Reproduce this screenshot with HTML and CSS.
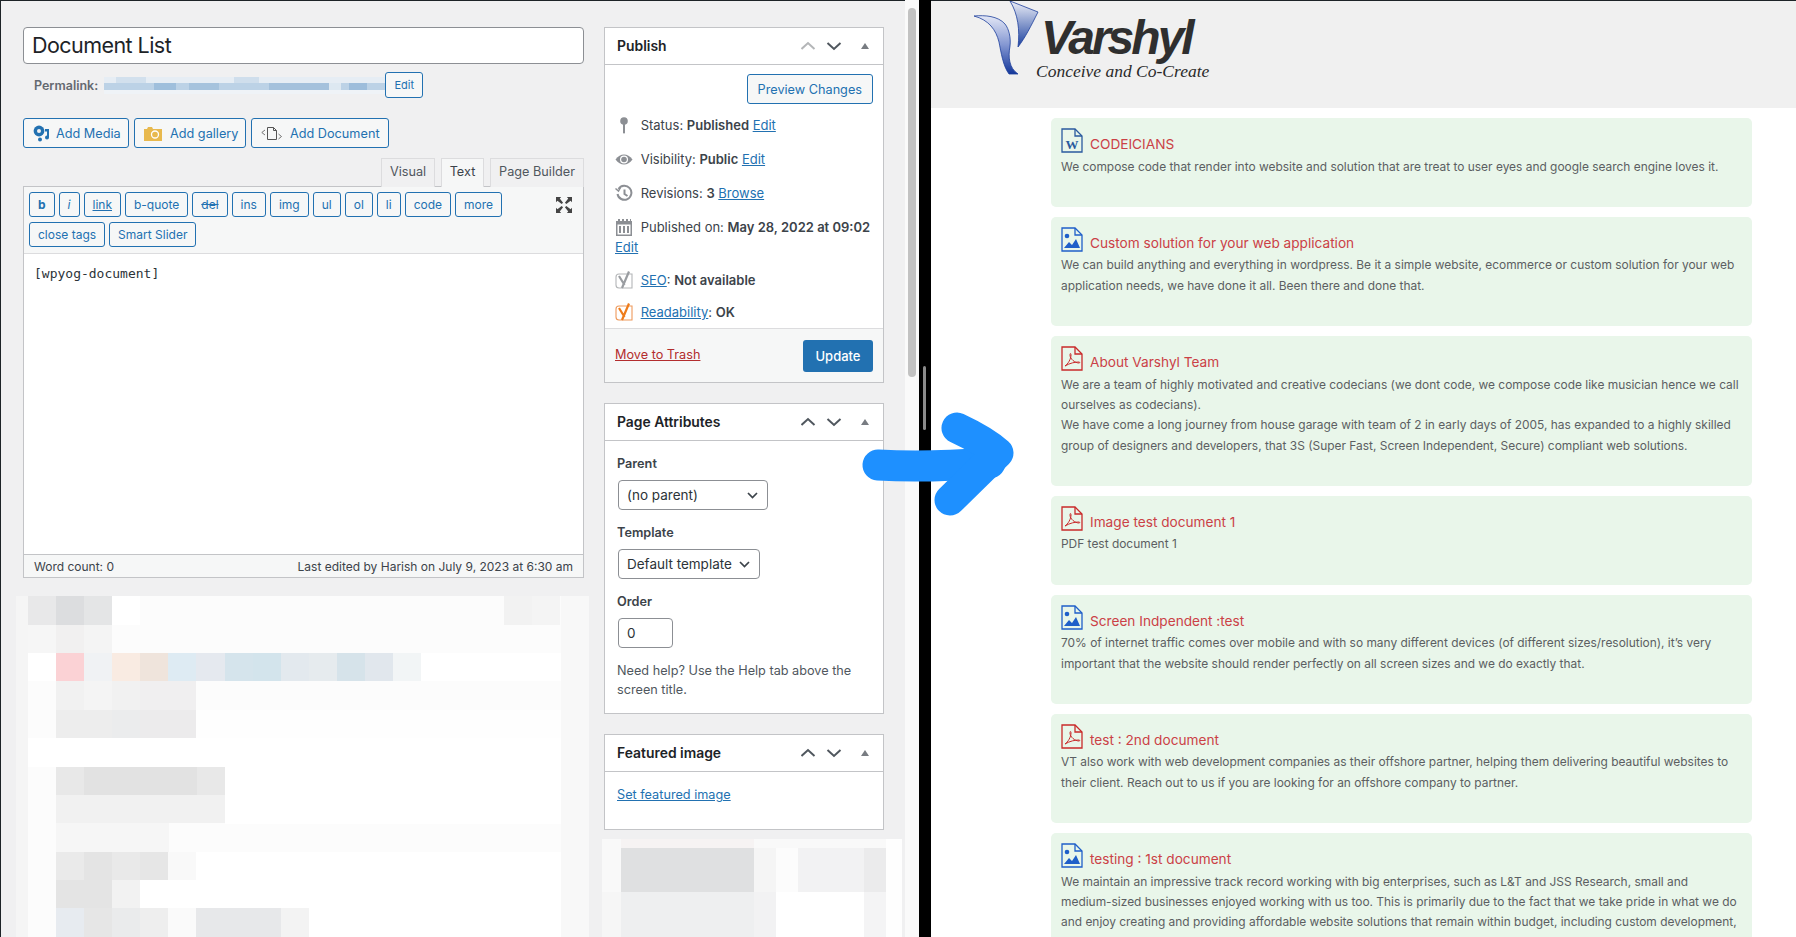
FILE: index.html
```html
<!DOCTYPE html>
<html>
<head>
  <meta charset="utf-8">
  <link rel="stylesheet" href="styles.css">
  <title>Document List</title>
</head>
<body>
  <div class="wp-pane">
    <div class="wp-columns">
      <div class="main-col">
        <div class="title-box">Document List</div>
        <div class="permalink">
          <b>Permalink:</b>
          <svg class="perma-blur" width="281" height="17" shape-rendering="crispEdges">
            <rect width="281" height="17" fill="#e6edf4"/>
            <rect y="6" width="281" height="7" fill="#bcd2e6"/>
            <rect x="12" y="0" width="30" height="6" fill="#d2e0ed"/>
            <rect x="50" y="6" width="22" height="7" fill="#9fbfdc"/>
            <rect x="85" y="6" width="30" height="7" fill="#a6c3dd"/>
            <rect x="130" y="0" width="25" height="6" fill="#cfdeec"/>
            <rect x="165" y="6" width="60" height="7" fill="#a4c1dc"/>
            <rect x="225" y="6" width="12" height="7" fill="#dde8f1"/>
            <rect x="245" y="6" width="18" height="7" fill="#9dbddb"/>
            <rect y="13" width="281" height="4" fill="#eff3f7"/>
          </svg>
          <span class="btn btn-small">Edit</span>
        </div>
        <div class="media-row">
          <span class="btn btn-media">
            <svg width="17" height="17" viewBox="0 0 17 17"><circle cx="6" cy="6" r="5.4" fill="#2271b1"/><circle cx="6" cy="6" r="2" fill="#f0f0f1"/><path d="M12 4h4v8.500a2 2 0 1 1-2-2V6.500h-2z" fill="#2271b1"/><circle cx="7" cy="14.500" r="2" fill="#2271b1"/></svg>
            Add Media
          </span>
          <span class="btn btn-media gallery">
            <svg width="18" height="15" viewBox="0 0 18 15"><path d="M0 3h3l1-2h4l1 2h9v12H0z" fill="#e8b94e"/><circle cx="11" cy="8.500" r="3.500" fill="none" stroke="#fff" stroke-width="1.300"/></svg>
            Add gallery
          </span>
          <span class="btn btn-media document">
            <svg width="21" height="15" viewBox="0 0 21 15" fill="none" stroke="#555"><path d="M6.500 1.500h6l3 3v9h-9z"/><path d="M12.500 1.500v3h3"/><path d="M4 4L.8 6.500 4 9M17.500 8l3 2.500-3 2.500" stroke-width=".8"/></svg>
            Add Document
          </span>
        </div>
        <div class="tabs">
          <span class="tab">Visual</span>
          <span class="tab active">Text</span>
          <span class="tab">Page Builder</span>
        </div>
        <div class="editor">
          <div class="toolbar">
            <div class="quicktags">
              <span class="qt bold">b</span>
              <span class="qt ital">i</span>
              <span class="qt under">link</span>
              <span class="qt">b-quote</span>
              <span class="qt strike">del</span>
              <span class="qt">ins</span>
              <span class="qt">img</span>
              <span class="qt">ul</span>
              <span class="qt">ol</span>
              <span class="qt">li</span>
              <span class="qt">code</span>
              <span class="qt">more</span>
              <span class="qt">close tags</span>
              <span class="qt">Smart Slider</span>
            </div>
            <svg class="fullscreen" width="16" height="16" viewBox="0 0 17 17" fill="#444"><path d="M0 0h5.500L4 1.500 7.500 6 6 7.500 1.500 4 0 5.500zM17 0v5.500L15.500 4 11 7.500 9.500 6 13 1.500 11.500 0zM0 17v-5.500L1.500 13 6 9.500 7.500 11 4 15.500 5.500 17zM17 17h-5.500l1.500-1.500L9.500 11 11 9.500l4.500 3.500 1.500-1.500z"/></svg>
          </div>
          <div class="editor-text">[wpyog-document]</div>
          <div class="editor-foot">
            <span>Word count: 0</span>
            <span>Last edited by Harish on July 9, 2023 at 6:30 am</span>
          </div>
        </div>
        <svg class="pixel-left" width="573" height="341" shape-rendering="crispEdges">
          <rect width="573" height="341" fill="#fcfcfc"/>
          <rect width="12" height="341" fill="#f5f5f5"/>
          <rect x="545" width="28" height="341" fill="#f8f8f8"/>
          <g transform="translate(12,0)">
            <rect x="0" y="0" width="28" height="29" fill="#e8e8e9"/>
            <rect x="28" y="0" width="28" height="29" fill="#dcdddf"/>
            <rect x="56" y="0" width="28" height="29" fill="#e4e5e6"/>
            <rect x="84" y="0" width="28" height="29" fill="#ffffff"/>
            <rect x="476" y="0" width="28" height="29" fill="#f2f2f2"/>
            <rect x="504" y="0" width="28" height="29" fill="#f4f4f4"/>
            <rect x="0" y="29" width="28" height="28" fill="#f6f6f6"/>
            <rect x="28" y="29" width="28" height="28" fill="#f1f0f0"/>
            <rect x="56" y="29" width="28" height="28" fill="#f4f4f4"/>
            <rect x="0" y="57" width="28" height="28" fill="#ffffff"/>
            <rect x="28" y="57" width="28" height="28" fill="#fbd2d5"/>
            <rect x="56" y="57" width="28" height="28" fill="#f0f2f4"/>
            <rect x="84" y="57" width="28" height="28" fill="#f9ebe2"/>
            <rect x="112" y="57" width="28" height="28" fill="#efe4dc"/>
            <rect x="140" y="57" width="28" height="28" fill="#deebf3"/>
            <rect x="168" y="57" width="29" height="28" fill="#e5e9ef"/>
            <rect x="197" y="57" width="28" height="28" fill="#d5e4ec"/>
            <rect x="225" y="57" width="28" height="28" fill="#d3e4ec"/>
            <rect x="253" y="57" width="28" height="28" fill="#e3e9ee"/>
            <rect x="281" y="57" width="28" height="28" fill="#e6ebee"/>
            <rect x="309" y="57" width="28" height="28" fill="#d6e3ea"/>
            <rect x="337" y="57" width="28" height="28" fill="#e1e7ed"/>
            <rect x="365" y="57" width="28" height="28" fill="#f2f5f6"/>
            <rect x="393" y="57" width="140" height="28" fill="#ffffff"/>
            <rect x="28" y="85" width="28" height="29" fill="#f1f1f1"/>
            <rect x="56" y="85" width="28" height="29" fill="#f4f4f4"/>
            <rect x="84" y="85" width="28" height="29" fill="#f1f1f1"/>
            <rect x="112" y="85" width="56" height="29" fill="#f0eff0"/>
            <rect x="28" y="114" width="56" height="28" fill="#ededed"/>
            <rect x="84" y="114" width="28" height="28" fill="#ebeced"/>
            <rect x="112" y="114" width="56" height="28" fill="#ecebec"/>
            <rect x="168" y="114" width="365" height="28" fill="#fefefe"/>
            <rect x="0" y="142" width="533" height="29" fill="#ffffff"/>
            <rect x="28" y="171" width="28" height="28" fill="#e8e8e8"/>
            <rect x="56" y="171" width="113" height="28" fill="#e2e2e2"/>
            <rect x="169" y="171" width="28" height="28" fill="#e8e8e8"/>
            <rect x="197" y="171" width="336" height="57" fill="#ffffff"/>
            <rect x="28" y="199" width="169" height="28" fill="#f1f1f1"/>
            <rect x="28" y="227" width="113" height="29" fill="#f6f6f6"/>
            <rect x="28" y="256" width="28" height="28" fill="#eaeaea"/>
            <rect x="56" y="256" width="28" height="28" fill="#e4e4e4"/>
            <rect x="84" y="256" width="28" height="28" fill="#e9e9e9"/>
            <rect x="112" y="256" width="28" height="28" fill="#e6e6e6"/>
            <rect x="140" y="256" width="28" height="28" fill="#f9f9f9"/>
            <rect x="168" y="256" width="365" height="85" fill="#ffffff"/>
            <rect x="28" y="284" width="56" height="28" fill="#e4e4e4"/>
            <rect x="84" y="284" width="28" height="28" fill="#f2f2f2"/>
            <rect x="112" y="284" width="56" height="28" fill="#ffffff"/>
            <rect x="28" y="312" width="28" height="29" fill="#e7ebf0"/>
            <rect x="56" y="312" width="28" height="29" fill="#e6e6e6"/>
            <rect x="84" y="312" width="28" height="29" fill="#eaebec"/>
            <rect x="112" y="312" width="28" height="29" fill="#eeeeee"/>
            <rect x="140" y="312" width="28" height="29" fill="#fafafa"/>
            <rect x="168" y="312" width="85" height="29" fill="#e7e8ea"/>
            <rect x="253" y="312" width="28" height="29" fill="#f3f3f3"/>
          </g>
        </svg>
      </div>
      <div class="side-col">
        <div class="box">
          <div class="box-head">
            <h3>Publish</h3>
            <svg class="box-ctrl" width="71" height="12" viewBox="-3 0 71 12" fill="none" stroke-width="2">
              <path d="M-2.500 9L4 3l6.500 6" stroke="#b4b6b8"/>
              <path d="M23.500 3l6.500 6 6.500-6" stroke="#50575e"/>
              <path d="M57 9h8l-4-6z" fill="#787c82" stroke="none"/>
            </svg>
          </div>
          <div class="publish-body">
            <div class="preview-row"><span class="btn btn-preview">Preview Changes</span></div>
            <div class="misc-row">
              <svg class="misc-icon" width="18" height="18" viewBox="0 0 18 18" fill="#8c8f94"><circle cx="9" cy="5" r="3.800"/><path d="M8 7h2v9.500L9 18l-1-1.500z"/></svg>
              Status: <b>Published</b> <a>Edit</a>
            </div>
            <div class="misc-row">
              <svg class="misc-icon" width="18" height="18" viewBox="0 0 18 18" fill="#8c8f94"><path d="M.5 9.500C3 6 6 4.500 9 4.500s6 1.500 8.500 5C15 13 12 14.500 9 14.500s-6-1.500-8.500-5z"/><circle cx="9" cy="9.500" r="4" fill="#fff"/><circle cx="9" cy="9.500" r="2.800"/></svg>
              Visibility: <b>Public</b> <a>Edit</a>
            </div>
            <div class="misc-row">
              <svg class="misc-icon" width="18" height="18" viewBox="0 0 18 18" fill="none" stroke="#8c8f94" stroke-width="2"><path d="M3.500 5A7 7 0 1 1 2.500 10"/><path d="M9.500 5.500V10l3 2"/><path d="M.5 4.500l3 2.500 2-3.500" stroke-width="1.500"/></svg>
              Revisions: <b>3</b> <a>Browse</a>
            </div>
            <div class="misc-row">
              <svg class="misc-icon" width="18" height="18" viewBox="0 0 18 18" fill="#8c8f94"><path d="M1 3h2V1h2v2h2V1h2v2h2V1h2v2h2V1h1v2h1v15H1zM2.500 6.500V16.500h13V6.500z"/><path d="M4 8h2v7H4zM8 8h2v7H8zM12 8h2v7h-2z"/></svg>
              Published on: <b>May 28, 2022 at 09:02</b> <a>Edit</a>
            </div>
            <div class="misc-row yoast">
              <svg class="misc-icon" width="18" height="18" viewBox="0 0 18 18" fill="none" stroke="#b4b6b8" stroke-width="1.100"><path d="M4 3h13v14H4a3 3 0 0 1-3-3V6a3 3 0 0 1 3-3z"/><path d="M4 5l5.500 9M14 .5L7 17" stroke="#9a9da1" stroke-width="2.200"/></svg>
              <a>SEO</a>: <b>Not available</b>
            </div>
            <div class="misc-row yoast">
              <svg class="misc-icon" width="18" height="18" viewBox="0 0 18 18" fill="none" stroke="#ee9a5c" stroke-width="1.100"><path d="M4 3h13v14H4a3 3 0 0 1-3-3V6a3 3 0 0 1 3-3z"/><path d="M4 5l5.500 9M14 .5L7 17" stroke="#ee7c1b" stroke-width="2.200"/></svg>
              <a>Readability</a>: <b>OK</b>
            </div>
          </div>
          <div class="publish-foot">
            <a class="trash">Move to Trash</a>
            <span class="btn-update">Update</span>
          </div>
        </div>
        <div class="box">
          <div class="box-head">
            <h3>Page Attributes</h3>
            <svg class="box-ctrl" width="71" height="12" viewBox="-3 0 71 12" fill="none" stroke-width="2">
              <path d="M-2.500 9L4 3l6.500 6" stroke="#50575e"/>
              <path d="M23.500 3l6.500 6 6.500-6" stroke="#50575e"/>
              <path d="M57 9h8l-4-6z" fill="#787c82" stroke="none"/>
            </svg>
          </div>
          <div class="attr-body">
            <div class="attr-label">Parent</div>
            <div class="select parent-select">(no parent)
              <svg width="11" height="7" viewBox="0 0 11 7" fill="none" stroke="#3c434a" stroke-width="1.700"><path d="M1 1l4.500 4.500L10 1"/></svg>
            </div>
            <div class="attr-label">Template</div>
            <div class="select template-select">Default template
              <svg width="11" height="7" viewBox="0 0 11 7" fill="none" stroke="#3c434a" stroke-width="1.700"><path d="M1 1l4.500 4.500L10 1"/></svg>
            </div>
            <div class="attr-label">Order</div>
            <div class="select order-input">0</div>
            <p class="attr-help">Need help? Use the Help tab above the screen title.</p>
          </div>
        </div>
        <div class="box featured">
          <div class="box-head">
            <h3>Featured image</h3>
            <svg class="box-ctrl" width="71" height="12" viewBox="-3 0 71 12" fill="none" stroke-width="2">
              <path d="M-2.500 9L4 3l6.500 6" stroke="#50575e"/>
              <path d="M23.500 3l6.500 6 6.500-6" stroke="#50575e"/>
              <path d="M57 9h8l-4-6z" fill="#787c82" stroke="none"/>
            </svg>
          </div>
          <div class="featured-body"><a>Set featured image</a></div>
        </div>
        <svg class="pixel-right" width="300" height="98" shape-rendering="crispEdges">
          <rect width="300" height="98" fill="#f9f9f9"/>
          <rect x="19" width="133" height="9" fill="#f6f3f3"/>
          <rect x="19" y="9" width="133" height="44" fill="#dfe0e1"/>
          <rect x="152" y="9" width="22" height="44" fill="#f5f5f5"/>
          <rect x="174" y="9" width="22" height="44" fill="#fcfcfc"/>
          <rect x="196" y="9" width="66" height="44" fill="#f2f2f3"/>
          <rect x="262" y="9" width="22" height="44" fill="#ebebec"/>
          <rect x="0" y="53" width="19" height="45" fill="#f6f6f6"/>
          <rect x="19" y="53" width="133" height="45" fill="#eeeff0"/>
          <rect x="152" y="53" width="22" height="45" fill="#f2f2f3"/>
          <rect x="174" y="53" width="88" height="45" fill="#ffffff"/>
          <rect x="262" y="53" width="22" height="45" fill="#f4f4f5"/>
          <rect x="284" width="16" height="98" fill="#fefefe"/>
        </svg>
      </div>
    </div>
  </div>
  <div class="scroll-strip"><div class="scroll-thumb"></div></div>
  <div class="divider"><div class="divider-grip"></div></div>
  <div class="site-pane">
    <div class="site-head">
      <div class="logo">
        <svg width="66" height="76" viewBox="0 0 66 76">
          <defs>
            <linearGradient id="swoosh" x1="0" y1="0" x2="0" y2="1">
              <stop offset="0" stop-color="#e4e8f6"/>
              <stop offset="0.5" stop-color="#8497d2"/>
              <stop offset="1" stop-color="#14379a"/>
            </linearGradient>
            <linearGradient id="swoosh-top" x1="0" y1="0" x2="0" y2="1">
              <stop offset="0" stop-color="#eef0f8"/>
              <stop offset="1" stop-color="#1c419f"/>
            </linearGradient>
          </defs>
          <path d="M1 15C12 14 25 15 32 23 36 28 38 37 37 45 35 56 36 67 45 73L36 73C30 65 28 51 26 41 23 29 16 19 1 15z" fill="url(#swoosh)" stroke="#1d3f9c" stroke-width=".8"/>
          <path d="M37 0L65 11C58 25 52 37 45 46 47 29 45 13 37 0z" fill="url(#swoosh-top)" stroke="#1d3f9c" stroke-width=".8"/>
        </svg>
        <div class="logo-words">
          <div class="logo-name">Varshyl</div>
          <div class="logo-tag">Conceive and Co-Create</div>
        </div>
      </div>
    </div>
    <div class="doc-list">
      <div class="doc-card">
        <div class="doc-title">
          <svg width="22" height="25" viewBox="0 0 22 25" fill="none" stroke="#2a5a9e" stroke-width="1.300"><path d="M1 1h13l7 7v16H1z"/><path d="M14 1v7h7"/><text x="11" y="21" text-anchor="middle" font-family="Liberation Serif" font-size="13" font-weight="700" fill="#2a5a9e" stroke="none">W</text></svg>
          <span>CODEICIANS</span>
        </div>
        <p>We compose code that render into website and solution that are treat to user eyes and google search engine loves it.</p>
      </div>
      <div class="doc-card">
        <div class="doc-title">
          <svg width="22" height="25" viewBox="0 0 22 25" fill="none" stroke="#1f5fc9" stroke-width="1.300"><path d="M1 1h13l7 7v16H1z"/><path d="M14 1v7h7"/><circle cx="6" cy="9" r="2.300" fill="#1f5fc9" stroke="none"/><path d="M3 21l5-6 3 3 4-6 4 9z" fill="#1f5fc9" stroke="none"/></svg>
          <span>Custom solution for your web application</span>
        </div>
        <p>We can build anything and everything in wordpress. Be it a simple website, ecommerce or custom solution for your web application needs, we have done it all. Been there and done that.</p>
      </div>
      <div class="doc-card">
        <div class="doc-title">
          <svg width="22" height="25" viewBox="0 0 22 25" fill="none" stroke="#c92a2a" stroke-width="1.300"><path d="M1 1h13l7 7v16H1z"/><path d="M14 1v7h7"/><path d="M4 20c3-2 6-7 6-11 0-2-1-2-1 0 0 4 5 8 9 8 1 0 1-1 0-1-4 0-9 1-14 4z" stroke-width="1"/></svg>
          <span>About Varshyl Team</span>
        </div>
        <p>We are a team of highly motivated and creative codecians (we dont code, we compose code like musician hence we call ourselves as codecians).<br>We have come a long journey from house garage with team of 2 in early days of 2005, has expanded to a highly skilled group of designers and developers, that 3S (Super Fast, Screen Independent, Secure) compliant web solutions.</p>
      </div>
      <div class="doc-card">
        <div class="doc-title">
          <svg width="22" height="25" viewBox="0 0 22 25" fill="none" stroke="#c92a2a" stroke-width="1.300"><path d="M1 1h13l7 7v16H1z"/><path d="M14 1v7h7"/><path d="M4 20c3-2 6-7 6-11 0-2-1-2-1 0 0 4 5 8 9 8 1 0 1-1 0-1-4 0-9 1-14 4z" stroke-width="1"/></svg>
          <span>Image test document 1</span>
        </div>
        <p>PDF test document 1</p>
      </div>
      <div class="doc-card">
        <div class="doc-title">
          <svg width="22" height="25" viewBox="0 0 22 25" fill="none" stroke="#1f5fc9" stroke-width="1.300"><path d="M1 1h13l7 7v16H1z"/><path d="M14 1v7h7"/><circle cx="6" cy="9" r="2.300" fill="#1f5fc9" stroke="none"/><path d="M3 21l5-6 3 3 4-6 4 9z" fill="#1f5fc9" stroke="none"/></svg>
          <span>Screen Indpendent :test</span>
        </div>
        <p>70% of internet traffic comes over mobile and with so many different devices (of different sizes/resolution), it’s very important that the website should render perfectly on all screen sizes and we do exactly that.</p>
      </div>
      <div class="doc-card">
        <div class="doc-title">
          <svg width="22" height="25" viewBox="0 0 22 25" fill="none" stroke="#c92a2a" stroke-width="1.300"><path d="M1 1h13l7 7v16H1z"/><path d="M14 1v7h7"/><path d="M4 20c3-2 6-7 6-11 0-2-1-2-1 0 0 4 5 8 9 8 1 0 1-1 0-1-4 0-9 1-14 4z" stroke-width="1"/></svg>
          <span>test : 2nd document</span>
        </div>
        <p>VT also work with web development companies as their offshore partner, helping them delivering beautiful websites to their client. Reach out to us if you are looking for an offshore company to partner.</p>
      </div>
      <div class="doc-card">
        <div class="doc-title">
          <svg width="22" height="25" viewBox="0 0 22 25" fill="none" stroke="#1f5fc9" stroke-width="1.300"><path d="M1 1h13l7 7v16H1z"/><path d="M14 1v7h7"/><circle cx="6" cy="9" r="2.300" fill="#1f5fc9" stroke="none"/><path d="M3 21l5-6 3 3 4-6 4 9z" fill="#1f5fc9" stroke="none"/></svg>
          <span>testing : 1st document</span>
        </div>
        <p>We maintain an impressive track record working with big enterprises, such as L&amp;T and JSS Research, small and <span class="nowrap">medium-sized</span> businesses enjoyed working with us too. This is primarily due to the fact that we take pride in what we do and enjoy creating and providing affordable website solutions that remain within budget, including custom development, design and maintenance.</p>
      </div>
    </div>
  </div>
  <svg class="arrow" width="160" height="130" viewBox="0 0 160 130" fill="none" stroke="#1e90ff" stroke-width="31" stroke-linecap="round" stroke-linejoin="round">
    <path d="M18 55C50 57 90 56 130 53"/>
    <path d="M97 18C112 25 128 34 138 43L90 90"/>
  </svg>
</body>
</html>
```

FILE: styles.css
```css
* {
  box-sizing: border-box;
}
body {
  margin: 0;
  height: 937px;
  overflow: hidden;
  display: flex;
  position: relative;
  font-family: Inter, "Noto Sans", Arial, sans-serif;
  font-size: 13px;
  color: #3c434a;
  background-color: #fff;
}
a {
  color: #2271b1;
  text-decoration: underline;
}

/* left window */
.wp-pane {
  width: 905px;
  flex-shrink: 0;
  height: 937px;
  overflow: hidden;
  background-color: #f0f0f1;
  border-top: 1px solid #1d2327;
  border-left: 1px solid #1d2327;
  padding: 26px 0 0 22px;
}
.wp-columns {
  display: flex;
  gap: 20px;
  align-items: flex-start;
}
.main-col {
  width: 561px;
  flex-shrink: 0;
}
.side-col {
  width: 280px;
  flex-shrink: 0;
}
.title-box {
  height: 37px;
  background-color: #fff;
  border: 1px solid #8c8f94;
  border-radius: 4px;
  padding-left: 8px;
  font-size: 21.500px;
  letter-spacing: -0.55px;
  line-height: 35px;
  color: #1d2327;
}
.permalink {
  display: flex;
  align-items: center;
  height: 26px;
  margin-top: 8px;
  padding-left: 11px;
  font-size: 12.500px;
  color: #646970;
}
.permalink b {
  font-weight: 600;
  margin-right: 6px;
}
.perma-blur {
  flex-shrink: 0;
}
.btn {
  display: inline-flex;
  align-items: center;
  color: #2271b1;
  border: 1px solid #2271b1;
  border-radius: 3px;
  background-color: #f6f7f7;
}
.btn-small {
  height: 26px;
  width: 38px;
  justify-content: center;
  font-size: 11px;
}
.media-row {
  display: flex;
  gap: 5px;
  margin-top: 20px;
}
.btn-media {
  height: 30px;
  width: 106px;
  padding-left: 9px;
  gap: 6px;
  font-size: 12.700px;
}
.gallery {
  width: 112px;
  gap: 8px;
}
.document {
  width: 138px;
  gap: 8px;
}
.tabs {
  display: flex;
  justify-content: flex-end;
  gap: 6px;
  margin-top: 10px;
  height: 29px;
}
.tab {
  display: flex;
  align-items: center;
  justify-content: center;
  padding: 0 0 3px;
  height: 29px;
  font-size: 12.700px;
  white-space: nowrap;
  color: #50575e;
  background-color: #f0f0f1;
  border: 1px solid #dcdcde;
  border-bottom: none;
}
.tab:nth-child(1) {
  width: 54px;
}
.tab:nth-child(2) {
  width: 43px;
}
.tab:nth-child(3) {
  width: 94px;
}
.tab.active {
  background-color: #f6f7f7;
  color: #3c434a;
  position: relative;
  z-index: 1;
}
.editor {
  border: 1px solid #c3c4c7;
  margin-top: -1px;
  background-color: #fff;
}
.toolbar {
  display: flex;
  justify-content: space-between;
  height: 67px;
  padding: 5px 5px 0;
  background-color: #f6f7f7;
  border-bottom: 1px solid #dcdcde;
}
.quicktags {
  display: flex;
  flex-wrap: wrap;
  align-content: flex-start;
  gap: 5px 4px;
  width: 490px;
}
.qt {
  display: flex;
  align-items: center;
  height: 25px;
  padding: 0 8px;
  font-size: 12px;
  color: #2271b1;
  background-color: #f6f7f7;
  border: 1px solid #2271b1;
  border-radius: 3px;
}
.bold {
  font-weight: 700;
}
.ital {
  font-style: italic;
}
.under {
  text-decoration: underline;
}
.strike {
  text-decoration: line-through;
}
.fullscreen {
  margin: 5px 6px 0 0;
}
.editor-text {
  height: 300px;
  padding: 10px 10px;
  font-family: "DejaVu Sans Mono", monospace;
  font-size: 13px;
  line-height: 20px;
  color: #2c3338;
}
.editor-foot {
  display: flex;
  justify-content: space-between;
  height: 23px;
  padding: 0 10px;
  align-items: center;
  font-size: 12px;
  color: #3c434a;
  background-color: #f6f7f7;
  border-top: 1px solid #c3c4c7;
}
.pixel-left {
  display: block;
  margin: 18px 0 0 -7px;
}

/* meta boxes */
.box {
  background-color: #fff;
  border: 1px solid #c3c4c7;
  margin-bottom: 20px;
}
.box-head {
  display: flex;
  justify-content: space-between;
  align-items: center;
  height: 37px;
  padding: 0 12px;
  border-bottom: 1px solid #c3c4c7;
}
.box-head h3 {
  margin: 0;
  font-size: 13.900px;
  font-weight: 600;
  color: #1d2327;
}
.box-ctrl {
  margin-right: -1px;
}
.publish-body {
  padding: 9px 10px 0;
}
.preview-row {
  display: flex;
  justify-content: flex-end;
  margin-bottom: 4px;
}
.btn-preview {
  height: 30px;
  padding: 0 10px;
  font-size: 12.700px;
}
.misc-row {
  padding: 7px 0;
  line-height: 20px;
  font-size: 13px;
}
.misc-row b {
  font-weight: 600;
}
.misc-icon {
  vertical-align: -4px;
  margin-right: 4px;
}
.yoast {
  padding: 6px 0;
}
.publish-foot {
  display: flex;
  justify-content: space-between;
  align-items: center;
  height: 54px;
  padding: 0 10px;
  background-color: #f6f7f7;
  border-top: 1px solid #dcdcde;
}
.trash {
  color: #b32d2e;
  font-size: 12.700px;
  padding-bottom: 2px;
}
.btn-update {
  display: flex;
  align-items: center;
  justify-content: center;
  width: 70px;
  height: 32px;
  font-size: 13px;
  font-weight: 500;
  color: #fff;
  background-color: #2271b1;
  border-radius: 3px;
}
.attr-body {
  padding: 13px 12px 0 12px;
  height: 272px;
}
.attr-label {
  font-size: 12.700px;
  font-weight: 600;
  color: #3c434a;
  line-height: 20px;
}
.select {
  display: flex;
  justify-content: space-between;
  align-items: center;
  height: 30px;
  margin: 6px 0 13px 1px;
  padding: 0 9px 0 8px;
  font-size: 13.500px;
  color: #2c3338;
  background-color: #fff;
  border: 1px solid #8c8f94;
  border-radius: 4px;
}
.parent-select {
  width: 150px;
}
.template-select {
  width: 142px;
}
.order-input {
  width: 55px;
}
.attr-help {
  margin: 13px 0 0;
  font-size: 12.700px;
  line-height: 19px;
  color: #50575e;
}
.featured {
  margin-bottom: 9px;
}
.featured-body {
  height: 57px;
  padding: 15px 12px 0;
  font-size: 12.700px;
}
.pixel-right {
  display: block;
  margin-left: -2px;
}

/* scrollbar and divider */
.scroll-strip {
  width: 14px;
  flex-shrink: 0;
  padding: 8px 3px 0;
  background-color: #fafafa;
}
.scroll-thumb {
  height: 369px;
  background-color: #c2c2c2;
  border-radius: 4px;
}
.divider {
  width: 12px;
  flex-shrink: 0;
  background-color: #000;
  padding: 366px 4px 0;
}
.divider-grip {
  width: 3px;
  height: 64px;
  background-color: #8a8a8a;
  border-radius: 2px;
}

/* right window */
.site-pane {
  flex: 1;
  min-width: 0;
}
.site-head {
  height: 108px;
  background-color: #f0f0f0;
  border-top: 1px solid #1d2327;
  padding-left: 42px;
}
.logo {
  display: flex;
  gap: 2px;
}
.logo-words {
  margin-top: 15px;
}
.logo-name {
  font-family: "Liberation Sans", Arial, sans-serif;
  font-size: 48px;
  line-height: 43px;
  font-style: italic;
  font-weight: 700;
  color: #2f2f2f;
  letter-spacing: -3px;
}
.logo-tag {
  margin: 3px 0 0 -5px;
  font-family: "Liberation Serif", serif;
  font-style: italic;
  font-size: 17.500px;
  line-height: 18px;
  color: #2a2a2a;
  white-space: nowrap;
}
.doc-list {
  display: flex;
  flex-direction: column;
  gap: 10px;
  padding: 10px 44px 0 120px;
}
.doc-card {
  padding: 10px 8px 14.600px 10px;
  background-color: #e9f6ea;
  border-radius: 5px;
}
.doc-title {
  display: flex;
  align-items: flex-end;
  height: 28.600px;
  gap: 7px;
  font-size: 13.650px;
  color: #cb4146;
}
.doc-title svg {
  flex-shrink: 0;
  align-self: flex-start;
}
.doc-title span {
  line-height: 18px;
  margin-bottom: 3.600px;
}
.doc-card p {
  margin: 0 0 15.400px;
  font-size: 11.930px;
  line-height: 20.300px;
  color: #5c5f62;
}
.nowrap {
  white-space: nowrap;
}

/* hand drawn arrow on top of the screenshot */
.arrow {
  position: absolute;
  left: 860px;
  top: 410px;
}
```
